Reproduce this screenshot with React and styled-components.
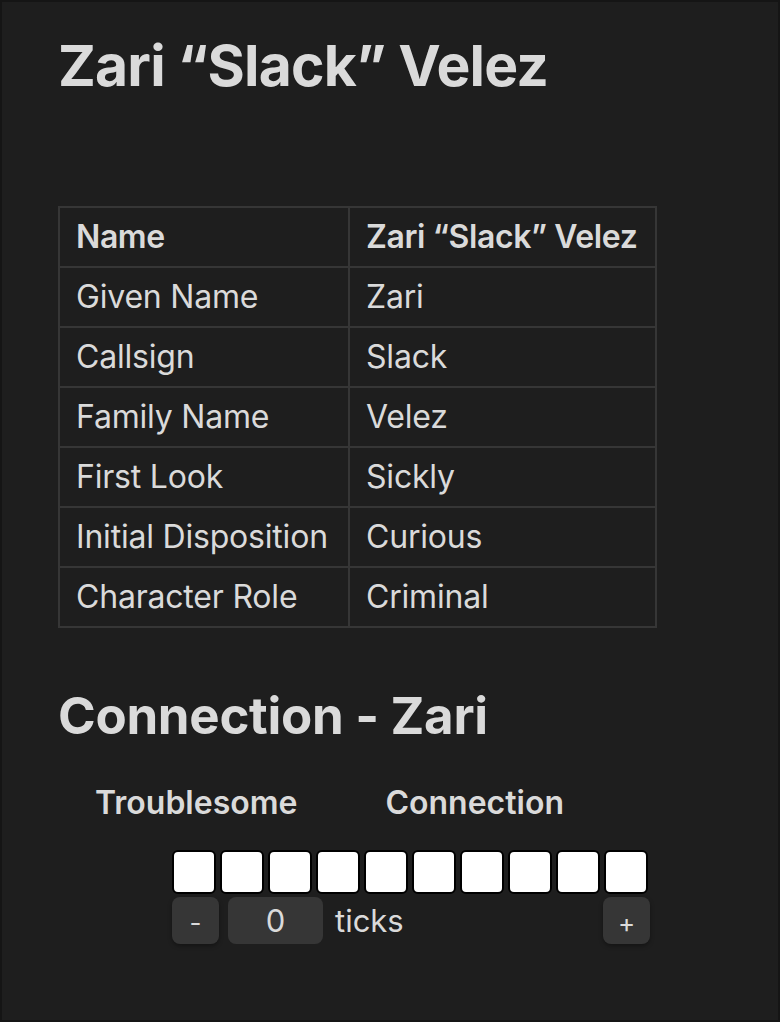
import React from 'react'
import styled, { createGlobalStyle } from 'styled-components'

const GlobalStyle = createGlobalStyle`
	html, body {
		margin: 0;
		padding: 0;
		background: #151515;
	}
	body {
		font-family: Inter, "Noto Sans", sans-serif;
		color: #dadada;
	}
`

const Page = styled.div`
	box-sizing: border-box;
	width: 780px;
	height: 1022px;
	border: 2px solid #151515;
	background: #1e1e1e;
	padding: 30px 56px 0;
`

const Title = styled.h1`
	margin: 0 0 106px;
	font-size: 57px;
	line-height: 1.2;
	font-weight: 700;
	letter-spacing: -0.8px;
	color: #dadada;
`

const Table = styled.table`
	border-collapse: collapse;
	table-layout: fixed;
	width: 597px;
	font-size: 32px;
	line-height: 44px;
`

const Cell = styled.td`
	box-sizing: border-box;
	border: 2px solid #363636;
	padding: 7px 16px;
	font-weight: ${(p) => (p.$head ? 600 : 400)};
	width: ${(p) => p.$w || 'auto'};
	white-space: nowrap;
	letter-spacing: ${(p) => (p.$head ? '-0.4px' : '-0.2px')};
`

const Heading = styled.h2`
	margin: 57px 0 0;
	font-size: 51px;
	line-height: 1.2;
	font-weight: 700;
	letter-spacing: -0.3px;
`

const Labels = styled.div`
	display: flex;
	gap: 88px;
	padding-left: 37px;
	margin-top: 32px;
	font-size: 32px;
	line-height: 1.5;
	font-weight: 600;
`

const Track = styled.div`
	display: flex;
	flex-direction: column;
	gap: 3px;
	margin: 23px 0 0 114px;
	width: 478px;
`

const Boxes = styled.div`
	display: flex;
	gap: 4px;
`

const Box = styled.div`
	box-sizing: border-box;
	width: 44px;
	height: 44px;
	background: #ffffff;
	border: 2px solid #000;
	border-radius: 6px;
`

const Controls = styled.div`
	display: flex;
	align-items: center;
`

const StepButton = styled.button`
	width: 47px;
	height: 47px;
	border: none;
	border-radius: 8px;
	background: #363636;
	color: #dadada;
	font-family: inherit;
	font-size: 26px;
	box-shadow: 0 2px 4px rgba(0, 0, 0, 0.35);
	padding: 4px 0 0;
	margin-left: ${(p) => (p.$push ? 'auto' : '0')};
`

const Count = styled.div`
	width: 95px;
	height: 47px;
	margin-left: 9px;
	border-radius: 8px;
	background: #363636;
	display: flex;
	align-items: center;
	justify-content: center;
	font-size: 31px;
`

const Unit = styled.span`
	margin-left: 12px;
	font-size: 31px;
`

const rows = [
	['Given Name', 'Zari'],
	['Callsign', 'Slack'],
	['Family Name', 'Velez'],
	['First Look', 'Sickly'],
	['Initial Disposition', 'Curious'],
	['Character Role', 'Criminal'],
]

export default function App() {
	return (
		<Page>
			<GlobalStyle />
			<Title>Zari “Slack” Velez</Title>
			<Table>
				<tbody>
					<tr>
						<Cell $head $w="290px">Name</Cell>
						<Cell $head $w="307px">Zari “Slack” Velez</Cell>
					</tr>
					{rows.map(([k, v]) => (
						<tr key={k}>
							<Cell>{k}</Cell>
							<Cell>{v}</Cell>
						</tr>
					))}
				</tbody>
			</Table>
			<Heading>Connection - Zari</Heading>
			<Labels>
				<span>Troublesome</span>
				<span>Connection</span>
			</Labels>
			<Track>
				<Boxes>
					{Array(10)
						.fill(0)
						.map((_, i) => (
							<Box key={i} />
						))}
				</Boxes>
				<Controls>
					<StepButton>-</StepButton>
					<Count>0</Count>
					<Unit>ticks</Unit>
					<StepButton $push>+</StepButton>
				</Controls>
			</Track>
		</Page>
	)
}
